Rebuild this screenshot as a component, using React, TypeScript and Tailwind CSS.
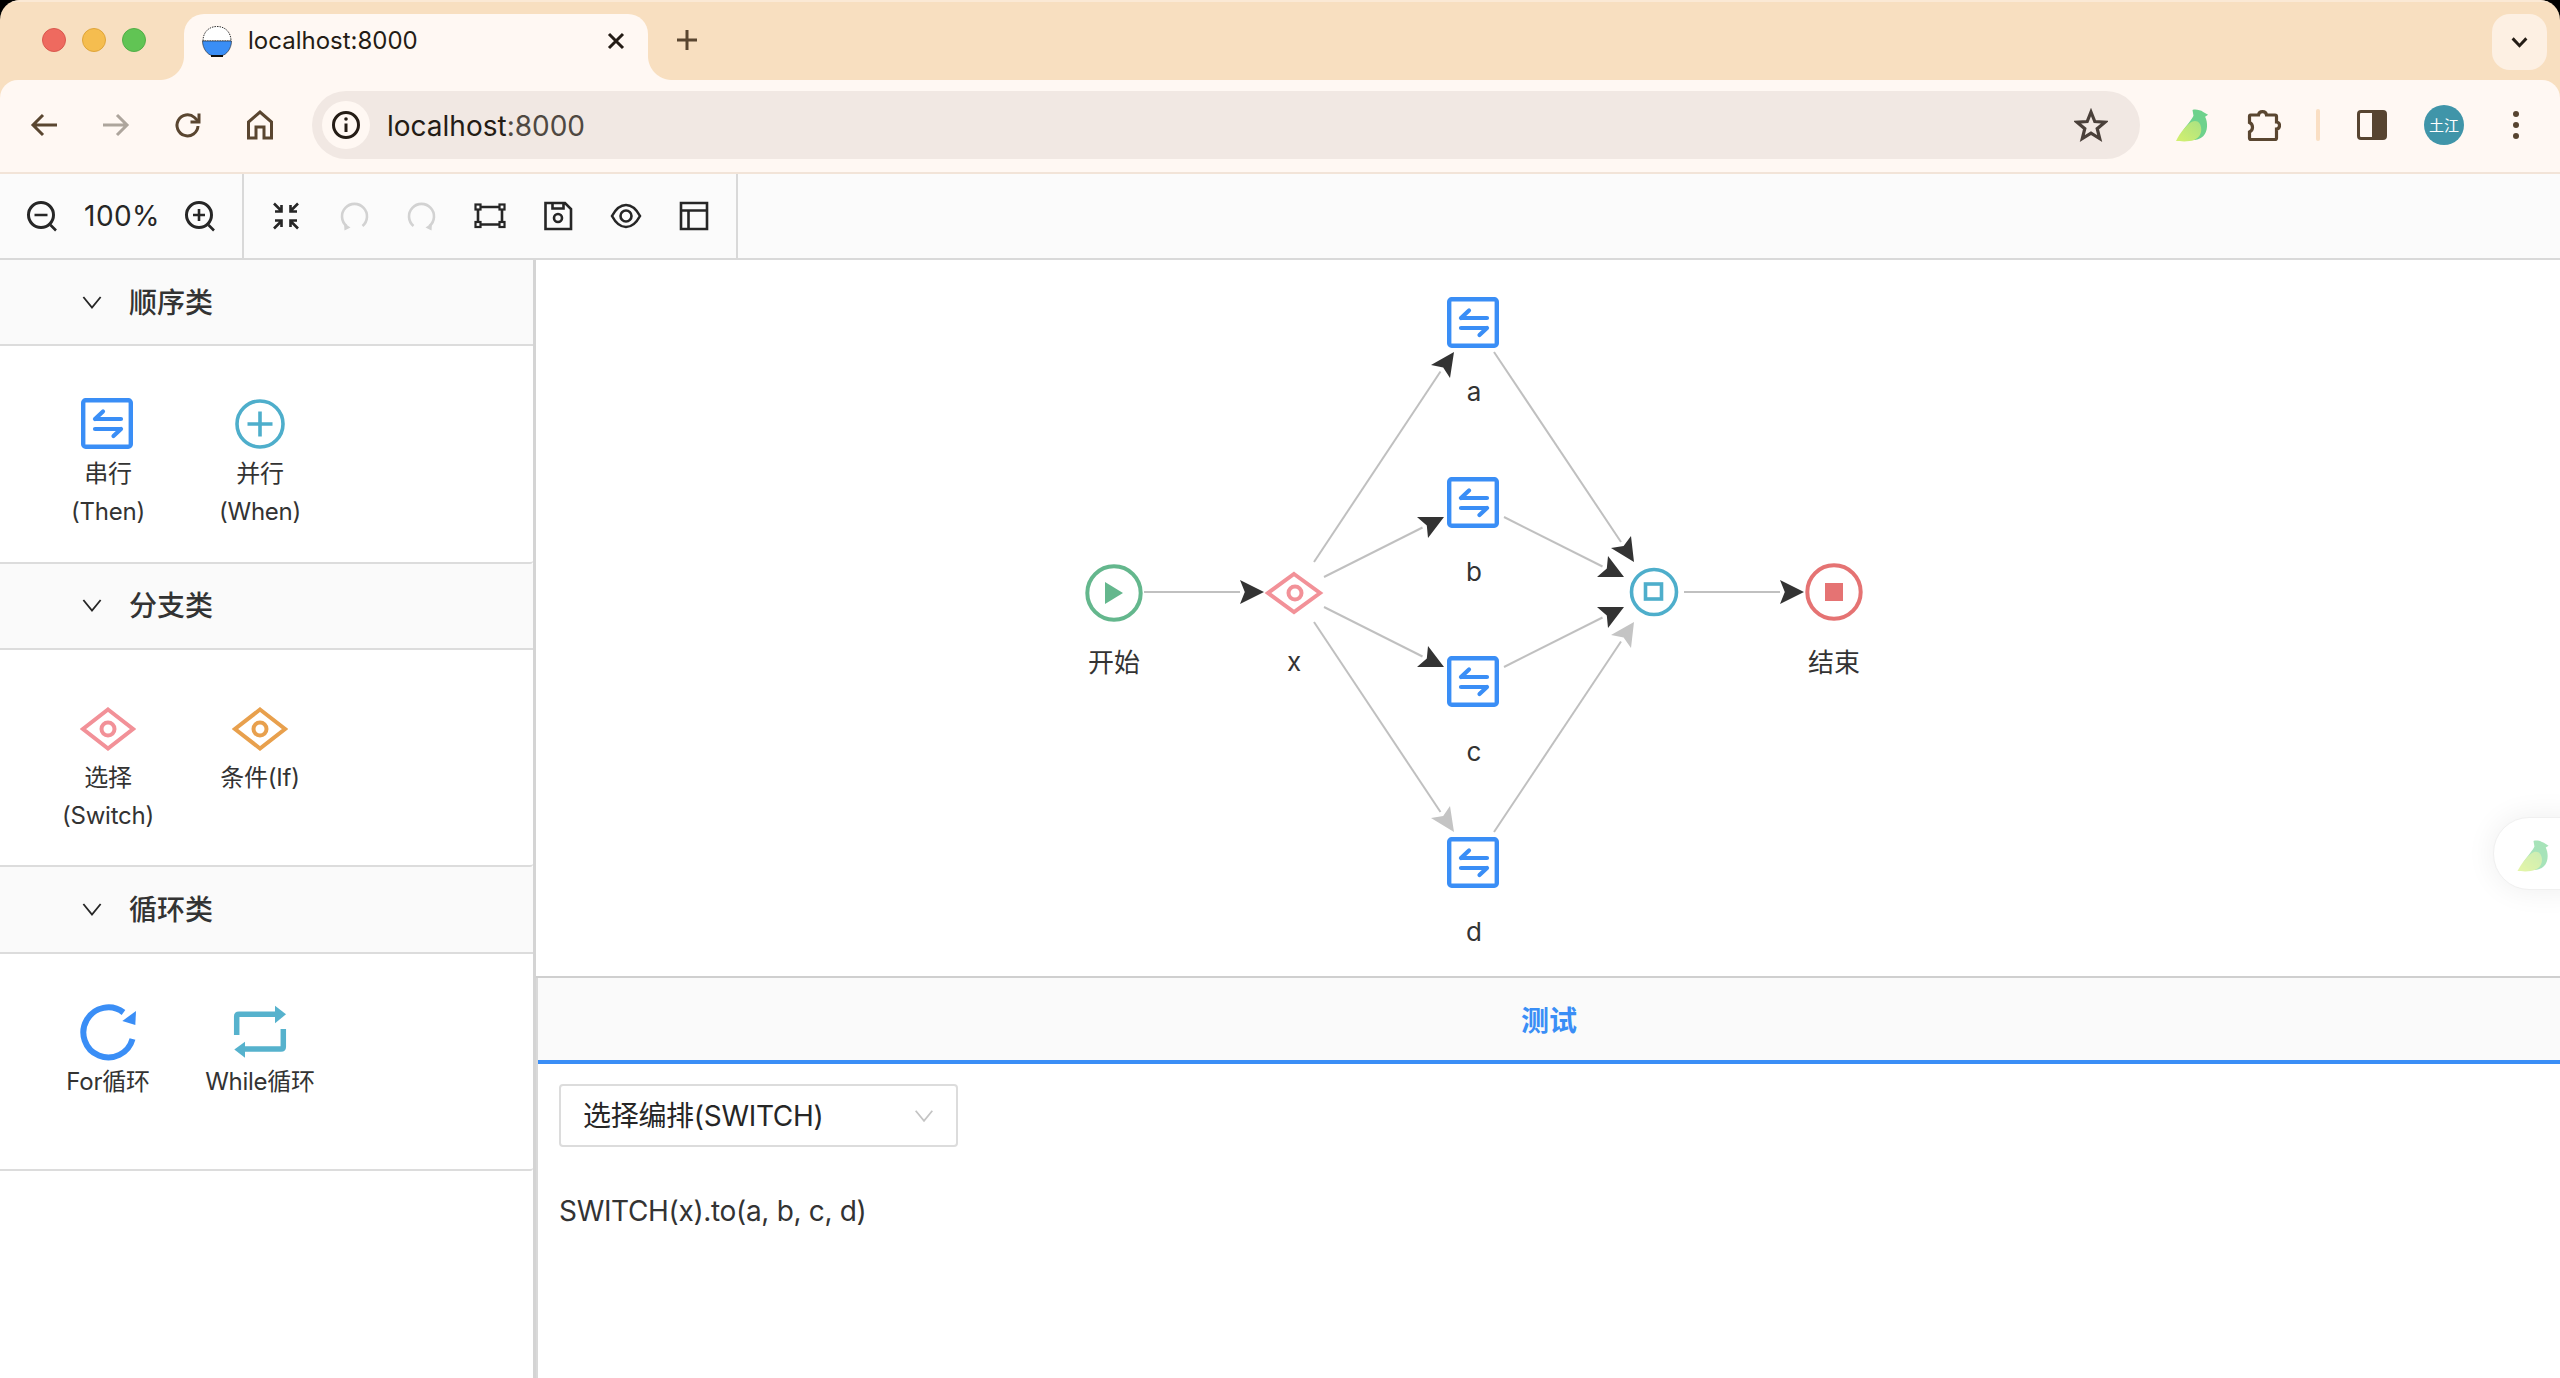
import React from "react";

const UI = "font-['Inter','Noto_Sans_CJK_SC',sans-serif]";

type P = [number, number];
const BLUE = "#3a8ef6";
const TEAL = "#4eaecb";

const Then = ({ className = "" }: { className?: string }) => (
  <svg viewBox="0 0 52 51" className={className} fill="none">
    <rect x="2.200" y="2.200" width="47.600" height="46.600" rx="2.500" stroke={BLUE} strokeWidth="4.400" />
    <path d="M14 21H40M14 21L22 13.500M14 31H40M40 31L32.500 38" stroke={BLUE} strokeWidth="4.200" strokeLinecap="round" strokeLinejoin="round" />
  </svg>
);

const Diamond = ({ color, className = "" }: { color: string; className?: string }) => (
  <svg viewBox="0 0 56 44" className={className} fill="none">
    <path d="M28 2.500L53 22L28 41.500L3 22Z" stroke={color} strokeWidth="4" />
    <circle cx="28" cy="22" r="6.500" stroke={color} strokeWidth="4" />
  </svg>
);

const Chevron = ({ className = "", color = "#262626" }: { className?: string; color?: string }) => (
  <svg viewBox="0 0 22 16" className={className} fill="none">
    <path d="M1.500 2L11 13.500L20.500 2" stroke={color} strokeWidth="2" />
  </svg>
);

const Bird = ({ className = "" }: { className?: string }) => (
  <svg viewBox="0 0 34 34" className={className}>
    <defs>
      <linearGradient id="birdw" x1="0" y1="1" x2="1" y2="0">
        <stop offset="0" stopColor="#d5f06e" />
        <stop offset="1" stopColor="#a9e283" />
      </linearGradient>
    </defs>
    <path d="M17 1C20 0 25 1 28 3L33 6L30 8C33 14 33 23 28 28C25 31 21 32 16 32L6 24C10 18 17 10 18 7Z" fill="#6ed28c" />
    <path d="M0 33C4 25 12 15 17 13C22 11 26 15 26 21C26 28 21 32 14 33C8 34 3 33 0 33Z" fill="url(#birdw)" />
  </svg>
);

const TOOLBAR_STROKE = "#262626";

function ToolIcon({ d, muted, children }: { d?: string; muted?: boolean; children?: React.ReactNode }) {
  return (
    <svg viewBox="0 0 32 32" className="w-[32px] h-[32px]" fill="none" stroke={muted ? "#d2d2d2" : TOOLBAR_STROKE} strokeWidth="2.600">
      {d && <path d={d} />}
      {children}
    </svg>
  );
}

function ToolBtn({ children }: { children: React.ReactNode }) {
  return <div className="w-[68px] h-full flex items-center justify-center">{children}</div>;
}

function Tool({ lines, children }: { lines: string[]; children: React.ReactNode }) {
  return (
    <div className="w-[152px] flex flex-col items-center">
      <div className="h-[57px] mb-[3px] flex items-center justify-center">{children}</div>
      {lines.map((l) => (
        <div key={l} className="h-[38px] leading-[38px] text-[24px] tracking-[-0.25px] text-[#333] whitespace-nowrap">{l}</div>
      ))}
    </div>
  );
}

function Section({ title, children }: { title: string; children: React.ReactNode }) {
  return (
    <div>
      <div className="h-[86.400px] bg-[#fafafa] border-b-2 border-[#dcdcdc] flex items-center">
        <Chevron className="w-[20px] h-[15px] ml-[82px]" />
        <div className="ml-[27px] pt-[1px] text-[28px] font-medium text-[#333]">{title}</div>
      </div>
      <div className="h-[217.300px] border-b-2 border-[#dcdcdc] rounded-br-[3px] pt-[49px] pl-[32px] flex items-start">{children}</div>
    </div>
  );
}

const NODES: { x: number; y: number; label: string; ly: number }[] = [
  { x: 1447, y: 297, label: "a", ly: 391.500 },
  { x: 1447, y: 477, label: "b", ly: 571.500 },
  { x: 1447, y: 656, label: "c", ly: 751.500 },
  { x: 1447, y: 837, label: "d", ly: 931.500 },
];

const LABELS: { x: number; y: number; t: string }[] = [
  { x: 1114, y: 662.500, t: "开始" },
  { x: 1294, y: 661.500, t: "x" },
  { x: 1834, y: 662.500, t: "结束" },
  ...NODES.map((n) => ({ x: 1474, y: n.ly, t: n.label })),
];

const EDGES: { from: P; tip: P; w1: P; w2: P; light?: boolean }[] = [
  { from: [1144, 592], tip: [1264, 592], w1: [1240, 580], w2: [1240, 604] },
  { from: [1314, 562], tip: [1454, 352], w1: [1431, 365], w2: [1450, 378] },
  { from: [1324, 577], tip: [1444, 517], w1: [1417, 517], w2: [1428, 538] },
  { from: [1324, 607], tip: [1444, 667], w1: [1417, 667], w2: [1428, 646] },
  { from: [1314, 622], tip: [1454, 832], w1: [1431, 818], w2: [1450, 806], light: true },
  { from: [1494, 352], tip: [1634, 562], w1: [1611, 548], w2: [1631, 536] },
  { from: [1504, 517], tip: [1624, 577], w1: [1597, 577], w2: [1608, 556] },
  { from: [1504, 667], tip: [1624, 607], w1: [1597, 607], w2: [1608, 628] },
  { from: [1494, 832], tip: [1634, 622], w1: [1611, 635], w2: [1631, 648], light: true },
  { from: [1684, 592], tip: [1804, 592], w1: [1780, 580], w2: [1780, 604] },
];

function arrow(e: (typeof EDGES)[number]) {
  const mx = (e.w1[0] + e.w2[0]) / 2;
  const my = (e.w1[1] + e.w2[1]) / 2;
  const nx = mx + (e.tip[0] - mx) * 0.2;
  const ny = my + (e.tip[1] - my) * 0.2;
  return `${e.tip[0]},${e.tip[1]} ${e.w1[0]},${e.w1[1]} ${nx},${ny} ${e.w2[0]},${e.w2[1]}`;
}

function Canvas() {
  return (
    <div className="relative h-[718px] shrink-0 border-b-2 border-[#cfcfcf] bg-white overflow-hidden">
      <svg viewBox="536 260 2024 716" className="absolute inset-0 w-full h-full" fill="none">
        {EDGES.map((e, i) => {
          const mx = (e.w1[0] + e.w2[0]) / 2;
          const my = (e.w1[1] + e.w2[1]) / 2;
          return (
            <g key={i}>
              <line x1={e.from[0]} y1={e.from[1]} x2={mx} y2={my} stroke="#c0c0c0" strokeWidth="2" />
              <polygon points={arrow(e)} fill={e.light ? "#c4c4c4" : "#333333"} />
            </g>
          );
        })}
        <circle cx="1114" cy="593" r="26.700" stroke="#64b78d" strokeWidth="4" />
        <polygon points="1105,582 1123,593 1105,604" fill="#64b78d" />
        <path d="M1294 574L1320 593L1294 612L1268 593Z" stroke="#f29198" strokeWidth="4" />
        <circle cx="1295" cy="593" r="6.500" stroke="#f29198" strokeWidth="4" />
        <circle cx="1654" cy="592" r="22.500" stroke={TEAL} strokeWidth="3.600" />
        <rect x="1645.500" y="584" width="16" height="15" stroke={TEAL} strokeWidth="3.600" />
        <circle cx="1834" cy="592" r="26.700" stroke="#e57373" strokeWidth="4" />
        <rect x="1825" y="583" width="18" height="18" fill="#e57373" />
      </svg>
      {NODES.map((n) => (
        <div key={n.label} className="absolute w-[52px] h-[51px]" style={{ left: n.x - 536, top: n.y - 260 }}>
          <Then className="w-full h-full" />
        </div>
      ))}
      {LABELS.map((l) => (
        <div
          key={l.t}
          className="absolute -translate-x-1/2 -translate-y-1/2 text-[26px] leading-[32px] text-[#333] whitespace-nowrap"
          style={{ left: l.x - 536, top: l.y - 260 }}
        >
          {l.t}
        </div>
      ))}
    </div>
  );
}

export default function App() {
  return (
    <div className="w-[2560px] h-[1378px] bg-black overflow-hidden">
      <div className={`${UI} w-full h-full rounded-t-[20px] overflow-hidden bg-[#f8dfc0] flex flex-col relative`}>
        {/* tab strip */}
        <div className="h-[80px] shrink-0 flex items-end relative border-t-2 border-[#fbe9d5]">
          <div className="flex items-center gap-[16px] pl-[42px] w-[184px] self-stretch pb-[2px]">
            <span className="w-[24px] h-[24px] rounded-full bg-[#ee6a5f] border border-[#d9584e]" />
            <span className="w-[24px] h-[24px] rounded-full bg-[#f5bd4f] border border-[#dfa53a]" />
            <span className="w-[24px] h-[24px] rounded-full bg-[#61c454] border border-[#52ae47]" />
          </div>
          <div className="relative w-[464px] h-[66px] bg-[#fff8f3] rounded-t-[20px] flex items-center pl-[17px] pr-[20px] pb-[12px]">
            <span className="absolute left-[-24px] bottom-0 w-[24px] h-[24px] bg-[radial-gradient(circle_at_0_0,#f8dfc0_23.5px,#fff8f3_24.5px)]" />
            <span className="absolute right-[-24px] bottom-0 w-[24px] h-[24px] bg-[radial-gradient(circle_at_100%_0,#f8dfc0_23.5px,#fff8f3_24.5px)]" />
            <svg viewBox="0 0 32 32" className="w-[32px] h-[32px] shrink-0">
              <path d="M2 16C2 7 8 1.500 16 1.500S30 7 30 16Z" fill="#fff" stroke="#333" strokeWidth="1" strokeDasharray="1.500 1" />
              <path d="M1.500 16H30.500C30.500 24 25 30 21 30.500H11C7 30 1.500 24 1.500 16Z" fill="#3a8ef6" stroke="#222" strokeWidth="0.600" />
              <rect x="10" y="30" width="12" height="2" fill="#111" />
            </svg>
            <span className="ml-[15px] text-[24px] text-[#241c15]">localhost:8000</span>
            <svg viewBox="0 0 20 20" className="w-[20px] h-[20px] ml-auto mr-[2px]" fill="none" stroke="#241c15" strokeWidth="3">
              <path d="M3 3L17 17M17 3L3 17" />
            </svg>
          </div>
          <svg viewBox="0 0 22 22" className="w-[22px] h-[22px] ml-[28px] mb-[29px]" fill="none" stroke="#5a4630" strokeWidth="3">
            <path d="M11 1V21M1 11H21" />
          </svg>
          <div className="ml-auto mr-[13px] mb-[10px] w-[55px] h-[56px] rounded-[18px] bg-[#fdf0e3] flex items-center justify-center">
            <svg viewBox="0 0 18 12" className="w-[17px] h-[11px]" fill="none" stroke="#241c15" strokeWidth="3.200">
              <path d="M1.500 1.500L9 9.500L16.500 1.500" />
            </svg>
          </div>
        </div>

        {/* browser toolbar */}
        <div className="h-[94px] shrink-0 bg-[#fff8f3] rounded-t-[18px] border-b-2 border-[#f2e4d8] flex items-center pl-[8px] pr-[8px] pb-[2px]">
          <div className="w-[72px] flex justify-center">
            <svg viewBox="0 0 28 24" className="w-[28px] h-[24px]" fill="none" stroke="#5a4630" strokeWidth="3">
              <path d="M27 12H3M13 2L3 12L13 22" />
            </svg>
          </div>
          <div className="w-[72px] flex justify-center">
            <svg viewBox="0 0 28 24" className="w-[28px] h-[24px]" fill="none" stroke="#ada59c" strokeWidth="3">
              <path d="M1 12H25M15 2L25 12L15 22" />
            </svg>
          </div>
          <div className="w-[72px] flex justify-center">
            <svg viewBox="0 0 28 28" className="w-[28px] h-[28px]" fill="none" stroke="#5a4630" strokeWidth="3">
              <path d="M24 15A10.500 10.500 0 1 1 20.500 6.500L24.500 10.500" />
              <path d="M25 2.500V11H16.500" />
            </svg>
          </div>
          <div className="w-[72px] flex justify-center">
            <svg viewBox="0 0 28 30" className="w-[28px] h-[30px]" fill="none" stroke="#5a4630" strokeWidth="3">
              <path d="M2.500 28V12L14 2L25.500 12V28H18V17H10V28Z" />
            </svg>
          </div>
          <div className="ml-[16px] flex-1 h-[68px] rounded-full bg-[#f1e8e3] flex items-center pl-[10px] pr-[32px]">
            <div className="w-[48px] h-[48px] rounded-full bg-[#fff8f3] flex items-center justify-center shrink-0">
              <svg viewBox="0 0 30 30" className="w-[30px] h-[30px]" fill="none" stroke="#241c15" strokeWidth="3">
                <circle cx="15" cy="15" r="12.500" />
                <path d="M15 13.500V22" />
                <circle cx="15" cy="9" r="1.800" fill="#241c15" stroke="none" />
              </svg>
            </div>
            <span className="ml-[17px] pt-[2px] text-[28px] text-[#241c15]">
              localhost<span className="text-[#4f4842]">:8000</span>
            </span>
            <svg viewBox="0 0 34 34" className="w-[34px] h-[34px] ml-auto" fill="none" stroke="#4a403a" strokeWidth="3.200">
              <polygon points="17,4 20.800,13.500 31,14.200 23.200,20.700 25.700,30.500 17,25.200 8.300,30.500 10.800,20.700 3,14.200 13.200,13.500" />
            </svg>
          </div>
          <div className="ml-[16px] w-[72px] flex justify-center">
            <Bird className="w-[33px] h-[33px]" />
          </div>
          <div className="w-[72px] flex justify-center">
            <svg viewBox="0 0 34 34" className="w-[34px] h-[34px]" fill="none" stroke="#5a4630" strokeWidth="3.200">
              <path d="M3.500 7H11.500C12 2.500 19 2.500 19.500 7H28C29 7 29.500 7.500 29.500 8.500V14C33.500 14.500 33.500 20.500 29.500 21V30C29.500 31 29 31.500 28 31.500H4C3 31.500 2.500 31 2.500 30V24C6.500 22 6.500 16.500 2.500 14.500V8.500C2.500 7.500 3 7 3.500 7Z" />
            </svg>
          </div>
          <div className="w-[36px] flex justify-center">
            <div className="w-[4px] h-[32px] rounded-full bg-[#fadfc4]" />
          </div>
          <div className="w-[72px] flex justify-center">
            <div className="w-[30px] h-[30px] rounded-[4px] border-[3.500px] border-[#574430] bg-[linear-gradient(90deg,#fff8f3_50%,#574430_50%)]" />
          </div>
          <div className="w-[72px] flex justify-center">
            <div className="w-[40px] h-[40px] rounded-full bg-[#4095a9] text-white text-[15px] flex items-center justify-center font-['Noto_Sans_CJK_SC',sans-serif]">土江</div>
          </div>
          <div className="w-[72px] flex flex-col items-center gap-[4.500px]">
            <span className="w-[6.500px] h-[6.500px] rounded-full bg-[#574430]" />
            <span className="w-[6.500px] h-[6.500px] rounded-full bg-[#574430]" />
            <span className="w-[6.500px] h-[6.500px] rounded-full bg-[#574430]" />
          </div>
        </div>

        {/* app toolbar */}
        <div className="h-[86px] shrink-0 bg-[#fbfbfb] border-b-2 border-[#d9d9d9] flex items-stretch">
          <div className="w-[244px] border-r-2 border-[#d9d9d9] flex items-center">
            <div className="w-[82px] flex justify-center">
              <ToolIcon d="M9.500 15H22.500M25.500 25L31 30.500">
                <circle cx="16" cy="15" r="12.500" strokeWidth="3" />
              </ToolIcon>
            </div>
            <div className="w-[80px] text-[28px] tracking-[0.4px] text-center text-[#262626]">100%</div>
            <div className="w-[74px] flex justify-center">
              <ToolIcon d="M10 15H22M16 9V21M25.500 25L31 30.500">
                <circle cx="16" cy="15" r="12.500" strokeWidth="3" />
              </ToolIcon>
            </div>
          </div>
          <div className="w-[494px] border-r-2 border-[#d9d9d9] flex items-center pl-[8px]">
            <ToolBtn>
              <ToolIcon>
                <path d="M4 3.500L11 10.500M11.500 5V11.500H5M28 3.500L21 10.500M20.500 5V11.500H27M4 28.500L11 21.500M11.500 27V20.500H5M28 28.500L21 21.500M20.500 27V20.500H27" />
              </ToolIcon>
            </ToolBtn>
            <ToolBtn>
              <ToolIcon muted d="M8.500 26A12.500 12.500 0 1 1 24.500 26">
                <polygon points="6,23 12.500,27.500 6.500,30.500" fill="#d2d2d2" stroke="none" />
              </ToolIcon>
            </ToolBtn>
            <ToolBtn>
              <ToolIcon muted d="M7.500 26A12.500 12.500 0 1 1 23.500 26">
                <polygon points="26,23 19.500,27.500 25.500,30.500" fill="#d2d2d2" stroke="none" />
              </ToolIcon>
            </ToolBtn>
            <ToolBtn>
              <ToolIcon>
                <path d="M6.500 7H25.500M6.500 24.500H25.500M4 9.500V22M28 9.500V22" />
                <rect x="1.500" y="4.500" width="5" height="5" strokeWidth="2.200" />
                <rect x="25.500" y="4.500" width="5" height="5" strokeWidth="2.200" />
                <rect x="1.500" y="22" width="5" height="5" strokeWidth="2.200" />
                <rect x="25.500" y="22" width="5" height="5" strokeWidth="2.200" />
              </ToolIcon>
            </ToolBtn>
            <ToolBtn>
              <ToolIcon d="M3.500 3H23L29 9V29H3.500ZM10.500 3V8.500H21.500V3">
                <circle cx="16" cy="18" r="4" />
              </ToolIcon>
            </ToolBtn>
            <ToolBtn>
              <ToolIcon d="M2 16C6 8.500 11 5 16 5S26 8.500 30 16C26 23.500 21 27 16 27S6 23.500 2 16Z">
                <circle cx="16" cy="16" r="5.500" />
              </ToolIcon>
            </ToolBtn>
            <ToolBtn>
              <ToolIcon d="M3 3H29V29H3ZM3 10.500H29M10.500 10.500V29" />
            </ToolBtn>
          </div>
        </div>

        {/* body */}
        <div className="flex-1 flex bg-white min-h-0">
          <div className="w-[536px] shrink-0 border-r-[3px] border-[#d4d4d4]">
            <Section title="顺序类">
              <Tool lines={["串行", "(Then)"]}>
                <Then className="w-[52px] h-[51px] mr-[3px]" />
              </Tool>
              <Tool lines={["并行", "(When)"]}>
                <svg viewBox="0 0 50 50" className="w-[50px] h-[50px]" fill="none" stroke={TEAL} strokeWidth="3.600">
                  <circle cx="25" cy="25" r="23" />
                  <path d="M12.500 25H37.500M25 12.500V37.500" />
                </svg>
              </Tool>
            </Section>
            <Section title="分支类">
              <Tool lines={["选择", "(Switch)"]}>
                <Diamond color="#f29198" className="w-[56px] h-[44px] mt-[2px]" />
              </Tool>
              <Tool lines={["条件(If)"]}>
                <Diamond color="#e8a04d" className="w-[56px] h-[44px] mt-[2px]" />
              </Tool>
            </Section>
            <Section title="循环类">
              <Tool lines={["For循环"]}>
                <svg viewBox="0 0 58 58" className="w-[58px] h-[58px] mt-[2px]" fill="none">
                  <path d="M44.500 9.500A25 25 0 1 0 53.500 36" stroke={BLUE} strokeWidth="6" />
                  <polygon points="57,8 56.300,22 43.300,18" fill={BLUE} />
                </svg>
              </Tool>
              <Tool lines={["While循环"]}>
                <svg viewBox="0 0 56 56" className="w-[56px] h-[56px] mt-[2px]" fill="none">
                  <path d="M4.700 31V12.500Q4.700 10.300 7 10.300H44M51.300 25V42.700Q51.300 45 49 45H12" stroke="#56b2cd" strokeWidth="5.500" />
                  <polygon points="43,1.700 54,10.300 43,19.300" fill="#56b2cd" />
                  <polygon points="13,37.700 2.300,45.500 13,53.700" fill="#56b2cd" />
                </svg>
              </Tool>
            </Section>
          </div>

          <div className="flex-1 min-w-0 flex flex-col">
            <Canvas />
            <div className="flex-1 border-l-2 border-[#d9d9d9] min-h-0">
              <div className="h-[86px] bg-[#fafafa] border-b-4 border-[#3a8ef6] flex items-center justify-center text-[28px] font-bold text-[#3a8ef6] pt-[4px]">
                测试
              </div>
              <div className="pl-[21px] pt-[20px]">
                <div className="w-[399px] h-[63px] rounded-[4px] border-2 border-[#dcdcdc] flex items-center pl-[22px] pr-[22px]">
                  <span className="text-[28px] tracking-[-0.3px] text-[#262626]">选择编排(SWITCH)</span>
                  <Chevron className="w-[20px] h-[14px] ml-auto" color="#c4c4c4" />
                </div>
                <div className="mt-[44px] text-[28px] leading-[40px] tracking-[-0.33px] text-[#333]">SWITCH(x).to(a, b, c, d)</div>
              </div>
            </div>
          </div>
        </div>

        {/* floating widget */}
        <div className="absolute right-[-40px] top-[817px] w-[107px] h-[73px] rounded-[36px] bg-white border border-[#f0f0f0] shadow-[0_0_30px_rgba(0,0,0,0.07)] flex items-center pl-[22px]">
          <Bird className="w-[35px] h-[32px] opacity-60 mt-[4px]" />
        </div>
      </div>
    </div>
  );
}
